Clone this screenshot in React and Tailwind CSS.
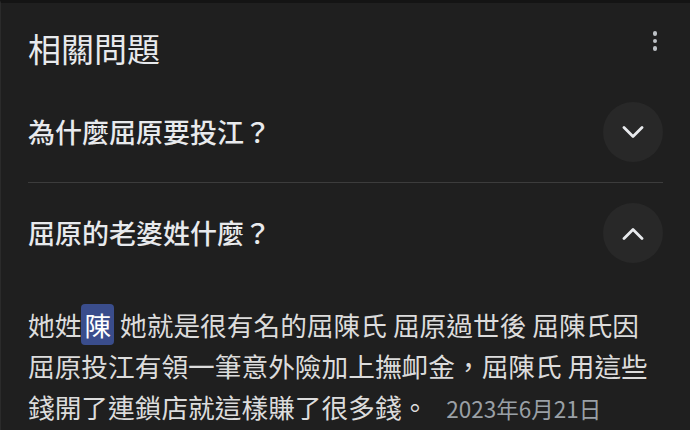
import React from "react";

const cjk = { fontFamily: '"Noto Sans CJK TC", "Noto Sans", sans-serif' };

function Chevron({ up }) {
  return (
    <svg width="22" height="13" viewBox="0 0 22 13" fill="none">
      <polyline
        points={up ? "2,11.5 11,2.5 20,11.5" : "2,1.5 11,10.5 20,1.5"}
        stroke="#e8eaed"
        strokeWidth="2.8"
        strokeLinecap="round"
        strokeLinejoin="round"
      />
    </svg>
  );
}

function QuestionRow({ text, open }) {
  return (
    <div className="flex h-[100px] items-center justify-between">
      <span className="text-[27px] leading-[36px] font-medium text-[#e8eaed]">{text}</span>
      <button className="flex h-[60px] w-[60px] items-center justify-center rounded-full bg-[#282828]">
        <Chevron up={open} />
      </button>
    </div>
  );
}

export default function App() {
  return (
    <div
      className="h-[430px] w-[690px] overflow-hidden border-t-[3px] border-l border-t-[#141414] border-l-[#2b2b2b] bg-[#1f1f1f]"
      style={cjk}
    >
      <div className="pl-[27px] pr-[27px] pt-[25px]">
        <div className="flex items-start justify-between">
          <h2 className="text-[33px] leading-[40px] font-normal text-[#e8eaed]">相關問題</h2>
          <div className="mr-[6px] mt-[3px] flex flex-col gap-[3px]">
            <span className="h-[4.5px] w-[4.5px] rounded-full bg-[#bdc1c6]" />
            <span className="h-[4.5px] w-[4.5px] rounded-full bg-[#bdc1c6]" />
            <span className="h-[4.5px] w-[4.5px] rounded-full bg-[#bdc1c6]" />
          </div>
        </div>

        <div className="mt-[14px]">
          <QuestionRow text="為什麼屈原要投江？" open={false} />
          <div className="h-px bg-[#3c3c3c]" />
          <QuestionRow text="屈原的老婆姓什麼？" open={true} />
        </div>

        <p className="pt-[21px] text-[26.7px] leading-[41px] text-[#dcdcdc]">
          她姓<span className="rounded-[4px] bg-[#3a4d8c] px-[3px] py-[1px] text-white">陳</span> 她就是很有名的屈陳氏 屈原過世後 屈陳氏因
          <br />
          屈原投江有領一筆意外險加上撫卹金，屈陳氏 用這些
          <br />
          錢開了連鎖店就這樣賺了很多錢。
          <span className="ml-[18px] text-[22.5px] text-[#9aa0a6]">2023年6月21日</span>
        </p>
      </div>
    </div>
  );
}
